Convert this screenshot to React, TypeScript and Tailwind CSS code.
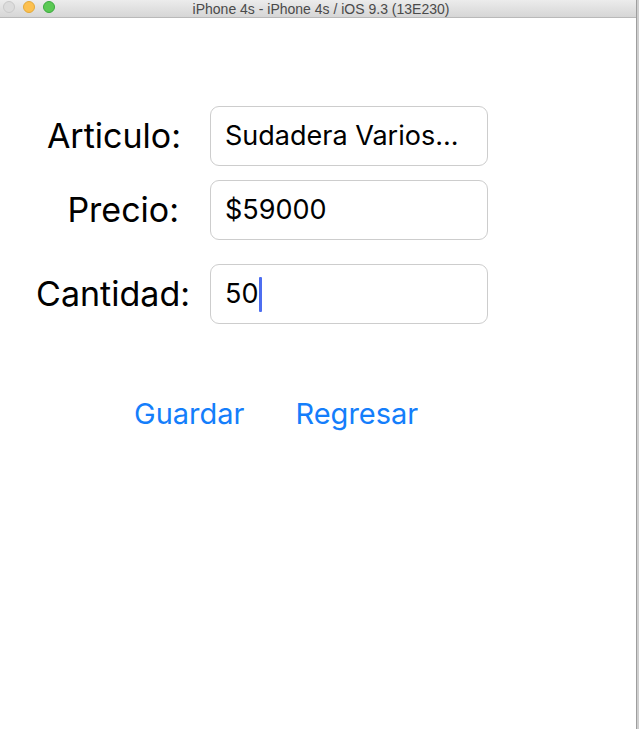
import React from "react";

const sf = { fontFamily: "Inter, 'Liberation Sans', sans-serif" };

function Field({ children }: { children: React.ReactNode }) {
  return (
    <div className="flex h-[60px] w-[278px] items-center rounded-[9px] border border-[#cdcdcd] bg-white pl-[14px] text-[27px] text-black">
      {children}
    </div>
  );
}

export default function App() {
  return (
    <div className="flex h-[729px] w-[639px] bg-white" style={sf}>
      <div className="flex w-[636px] flex-col">
        <div className="relative flex h-[18px] items-center justify-center border-b border-[#b9b9b9] bg-gradient-to-b from-[#ececec] to-[#d6d6d6]">
          <div className="absolute left-[3px] top-[1px] flex gap-[8px]">
            <div className="h-[12px] w-[12px] rounded-full border border-[#c9c9c9] bg-[#dcdcdc]" />
            <div className="h-[12px] w-[12px] rounded-full border border-[#e2a93a] bg-[#fcc04f]" />
            <div className="h-[12px] w-[12px] rounded-full border border-[#3aa93f] bg-[#5bc954]" />
          </div>
          <span className="ml-[6px] text-[14px] leading-none text-[#4a4a4a]" style={{ fontFamily: "'Liberation Sans', sans-serif" }}>
            iPhone 4s - iPhone 4s / iOS 9.3 (13E230)
          </span>
        </div>
        <div className="flex flex-col pt-[88px]">
          <div className="flex items-center">
            <div className="w-[181px] text-right text-[34px] leading-none text-black">Articulo:</div>
            <div className="ml-[29px]">
              <Field>Sudadera Varios...</Field>
            </div>
          </div>
          <div className="mt-[14px] flex items-center">
            <div className="w-[179px] text-right text-[34px] leading-none text-black">Precio:</div>
            <div className="ml-[31px]">
              <Field>$59000</Field>
            </div>
          </div>
          <div className="mt-[24px] flex items-center">
            <div className="w-[190px] text-right text-[34px] leading-none text-black">Cantidad:</div>
            <div className="ml-[20px]">
              <Field>
                <span>50</span>
                <span className="ml-[1px] h-[35px] w-[3px] rounded-[1px] bg-[#4d6ef0]" />
              </Field>
            </div>
          </div>
          <div className="mt-[75px] flex items-center">
            <span className="ml-[134px] text-[29px] leading-none text-[#147efb]">Guardar</span>
            <span className="ml-[51px] text-[29px] leading-none text-[#147efb]">Regresar</span>
          </div>
        </div>
      </div>
      <div className="w-[3px] border-l border-[#9e9e9e] bg-[#cfcfcf]" />
    </div>
  );
}
